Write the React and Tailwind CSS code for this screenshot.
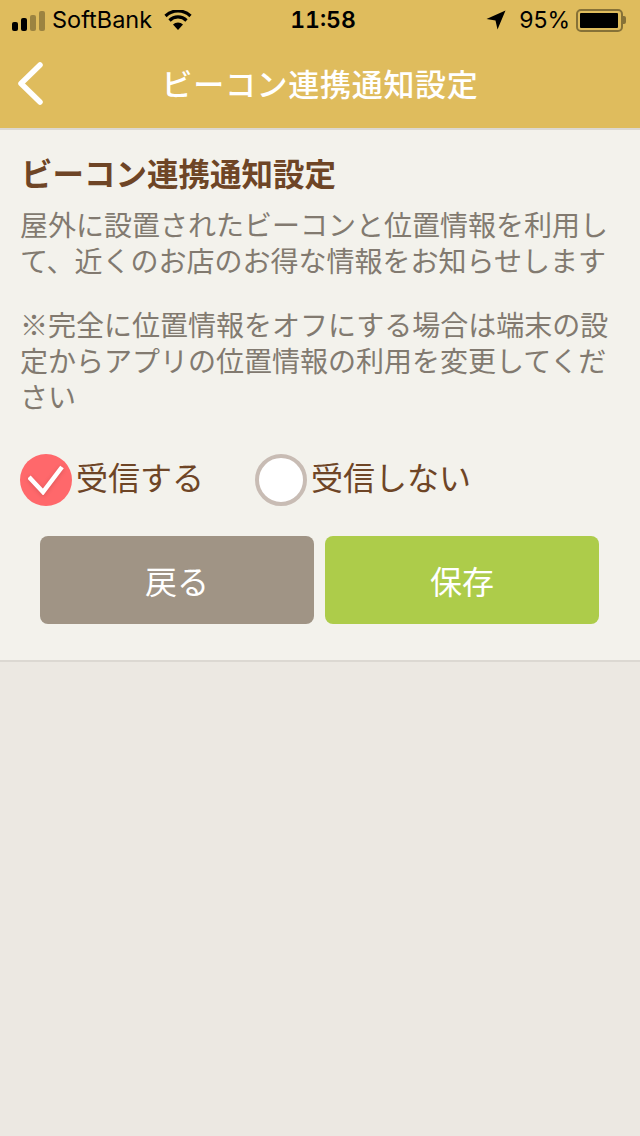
import React from 'react';

const CJK = "font-['Noto_Sans_CJK_JP',sans-serif]";
const SANS = "font-['Inter',sans-serif]";

function StatusBar() {
  return (
    <div className={`flex h-10 items-center justify-between pl-3 pr-[14px] text-[23px] text-black ${SANS}`}>
      <div className="flex w-[220px] items-center">
        <div className="flex items-end gap-[3px] pt-[1px]">
          <div className="h-[9px] w-[6px] rounded-[2px] bg-black" />
          <div className="h-[13px] w-[6px] rounded-[2px] bg-black" />
          <div className="h-[16px] w-[6px] rounded-[2px] bg-black/30" />
          <div className="h-[20px] w-[6px] rounded-[2px] bg-black/30" />
        </div>
        <span className="ml-[7px] text-[23.5px]">SoftBank</span>
        <svg className="ml-3" width="28" height="20" viewBox="0 0 28 20">
          <path d="M14 20 L9 14.5 A7 7 0 0 1 19 14.5 Z" fill="#000" />
          <path d="M5.5 10.5 A12 12 0 0 1 22.5 10.5" fill="none" stroke="#000" strokeWidth="3.2" />
          <path d="M1.5 6 A18 18 0 0 1 26.5 6" fill="none" stroke="#000" strokeWidth="3.2" />
        </svg>
      </div>
      <span className="ml-[8px] font-semibold tabular-nums">11:58</span>
      <div className="flex w-[220px] items-center justify-end">
        <svg width="20" height="20" viewBox="0 0 20 20">
          <path d="M19.5 0.5 L11.5 19.5 L9.5 10.5 L0.5 9 Z" fill="#000" />
        </svg>
        <span className="ml-[13px] mr-[6px]">95%</span>
        <div className="flex items-center">
          <div className="h-[23px] w-[47px] rounded-[5px] border-2 border-black/40 p-[2px]">
            <div className="h-full w-[38px] rounded-[1px] bg-black" />
          </div>
          <div className="h-[8px] w-[3px] rounded-r-[2px] bg-black/40" />
        </div>
      </div>
    </div>
  );
}

function NavBar() {
  return (
    <div className="relative flex h-[88px] items-center justify-center pb-[1px]">
      <svg className="absolute left-[16px] top-[21px]" width="28" height="44" viewBox="0 0 28 44">
        <path d="M24 4 L5 22.5 L24 41" fill="none" stroke="#fff" strokeWidth="5.5" strokeLinecap="round" strokeLinejoin="round" />
      </svg>
      <h1 className={`text-[31px] font-medium tracking-[0.7px] text-white ${CJK}`}>ビーコン連携通知設定</h1>
    </div>
  );
}

function Radio({ checked, label, className }) {
  return (
    <div className={`flex items-center ${className}`}>
      {checked ? (
        <div className="flex h-[52px] w-[52px] items-center justify-center rounded-full bg-[#ff686b]">
          <svg className="drop-shadow-sm" width="36" height="30" viewBox="0 0 36 30">
            <path d="M1 12 L15 27 L34 2" fill="none" stroke="#fff" strokeWidth="4.5" />
          </svg>
        </div>
      ) : (
        <div className="h-[52px] w-[52px] rounded-full border-4 border-[#c8bcb4] bg-white" />
      )}
      <span className="ml-[4px] pb-[8px] text-[32px] leading-[44px] text-[#6e4526]">{label}</span>
    </div>
  );
}

export default function App() {
  return (
    <div className={`flex min-h-[1136px] w-[640px] flex-col bg-[#ece8e2] ${CJK}`}>
      <header className="h-[130px] border-b-2 border-[#dcd8d2] bg-[#dfbc5d]">
        <StatusBar />
        <NavBar />
      </header>
      <section className="h-[532px] border-b-2 border-[#dcd8d2] bg-[#f3f2ec] pt-[21px]">
        <div className="pl-[20px] pr-[15px]">
          <h2 className="pl-[1px] text-[31.5px] font-bold leading-[42px] text-[#6e4526]">ビーコン連携通知設定</h2>
          <p className="mt-[13px] text-[28px] leading-[36px] text-[#827a70]">
            屋外に設置されたビーコンと位置情報を利用して、近くのお店のお得な情報をお知らせします
          </p>
          <p className="mt-[28px] text-[28px] leading-[36px] text-[#827a70]">
            ※完全に位置情報をオフにする場合は端末の設定からアプリの位置情報の利用を変更してください
          </p>
        </div>
        <div className="mt-[40px] flex pl-[20px]">
          <Radio checked label="受信する" className="w-[235px]" />
          <Radio label="受信しない" />
        </div>
        <div className="mt-[30px] flex gap-[11px] pl-[40px] pr-[41px]">
          <button className="h-[88px] flex-1 rounded-[8px] bg-[#a09485] text-[32px] text-white">戻る</button>
          <button className="h-[88px] flex-1 rounded-[8px] bg-[#adcc4a] text-[32px] text-white">保存</button>
        </div>
      </section>
    </div>
  );
}
